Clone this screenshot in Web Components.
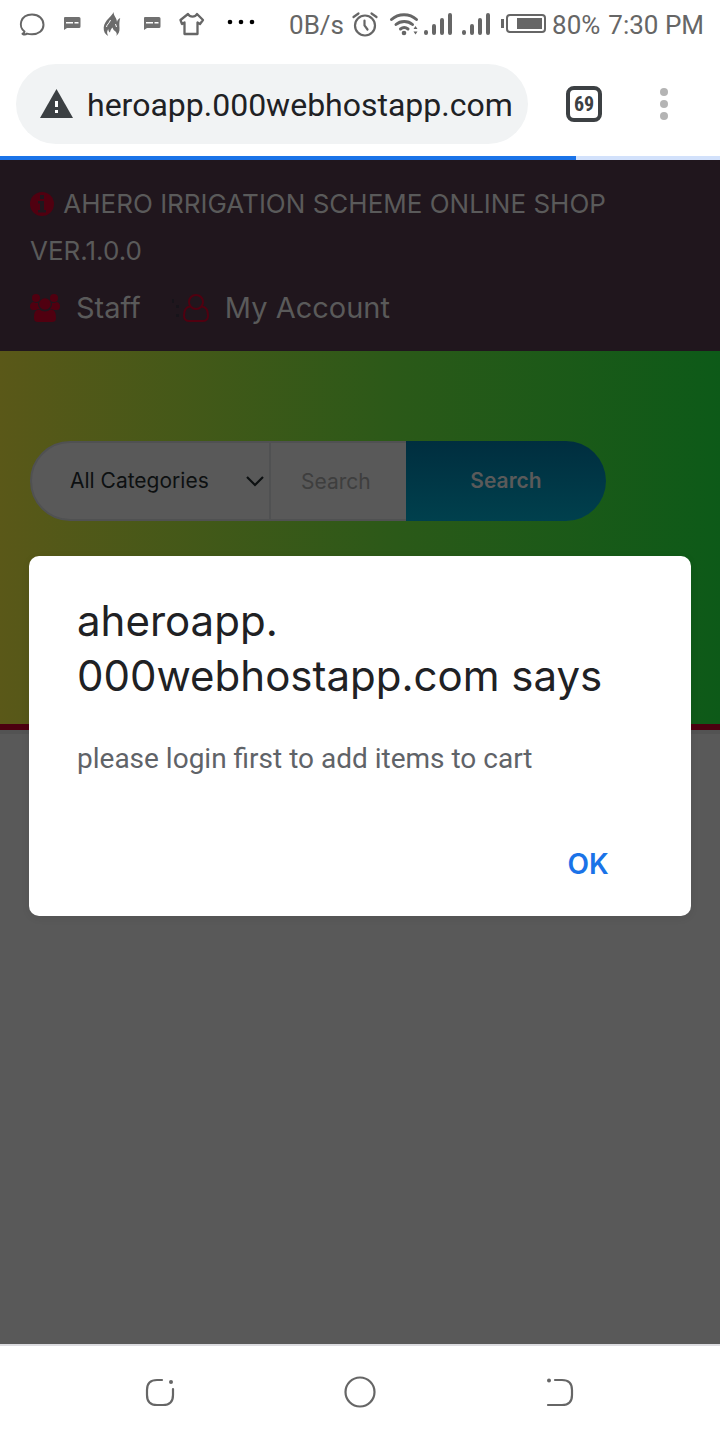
<!DOCTYPE html>
<html lang="en">
<head>
<meta charset="utf-8">
<meta name="viewport" content="width=device-width, initial-scale=1">
<title>Ahero Irrigation Scheme Online Shop</title>
<style>
html, body { margin: 0; background: #fff; }
body { font-family: Roboto, "Liberation Sans", sans-serif; }
</style>
</head>
<body>
<phone-screen>
  <status-bar slot="top"></status-bar>
  <browser-toolbar slot="top" tabs="69">heroapp.000webhostapp.com</browser-toolbar>
  <shop-header slot="page"></shop-header>
  <shop-banner slot="page"></shop-banner>
  <alert-dialog slot="dialog">
    <span slot="title">aheroapp.<br>000webhostapp.com says</span>
    <span slot="message">please login first to add items to cart</span>
    <span slot="action">OK</span>
  </alert-dialog>
  <navigation-bar slot="bottom"></navigation-bar>
</phone-screen>

<script>
function define(name, html) {
  const template = document.createElement('template');
  template.innerHTML = html;
  customElements.define(name, class extends HTMLElement {
    constructor() {
      super();
      this.attachShadow({ mode: 'open' }).append(template.content.cloneNode(true));
    }
    connectedCallback() {
      const tabs = this.shadowRoot.querySelector('[data-tabs]');
      if (tabs) tabs.textContent = this.getAttribute('tabs');
    }
  });
}

define('phone-screen', `
<style>
:host { display: flex; flex-direction: column; min-height: 100vh; }
main { flex: 1; position: relative; background: #595959; }
.layer { position: absolute; inset: 0; display: flex; align-items: center; justify-content: center; padding: 0 29px 32px; }
</style>
<slot name="top"></slot>
<main><slot name="page"></slot><div class="layer"><slot name="dialog"></slot></div></main>
<slot name="bottom"></slot>`);

define('status-bar', `
<style>
:host { display: flex; justify-content: space-between; align-items: center; height: 48px; padding: 0 16px; color: #666; font-size: 26px; line-height: 48px; white-space: nowrap; }
svg { display: block; flex: none; }
.text { display: flex; align-items: center; }
.text span { padding-top: 2px; }
.text .net { margin-right: 6px; }
.text svg { margin-right: 6px; }
.text .load { margin-right: 8px; }
</style>
<svg width="248" height="48" viewBox="16 0 248 48" fill="none" stroke="#666" stroke-width="2" stroke-linejoin="round" aria-hidden="true">
  <path d="M24.500 31.500C18 27 20 14.500 32 14.500c7 0 11.500 4.500 11.500 10.200 0 6-5 9.500-11.500 9.500-2 0-3.500-.2-5-.6-1 .8-3 1.100-4.500.2 1.500-.5 2-1.500 2-2.300z"/>
  <path fill="#707070" stroke="none" d="M65 17h14q1.500 0 1.500 1.500v8q0 1.500-1.500 1.500H67l-3 2V18q0-1 1-1z"/><path stroke="#fff" stroke-width="1.500" d="M66 22.800h7m1.500 0h4"/>
  <path fill="#707070" stroke="none" transform="translate(80 0)" d="M65 17h14q1.500 0 1.500 1.500v8q0 1.500-1.500 1.500H67l-3 2V18q0-1 1-1z"/><path stroke="#fff" stroke-width="1.500" d="M146 22.800h7m1.500 0h4"/>
  <path fill="#6b6b6b" stroke="none" d="M113.500 12c-1 4-9 8-9.800 15.500-.3 4 1.500 7 4.500 8.500-2-4-.5-5.500 0-7 .2 2 .8 3 1.800 3.500.3-2 1.200-3.800 2.500-5 .5 2 1.700 3 3 4 1.500 1.500 1.700 3 .5 4.500 2.500-1.500 3.800-4.500 3.500-8-.2-3-.3-7 .7-10-1.800 1-3 2-3.200 4-.5-5-3-5-3.500-10z"/><path stroke="#fff" stroke-width="1" d="M106.500 27c0-2 3-4 4-7M115.500 24l1 3M109 35l2-2M114 35v-2"/>
  <path stroke-width="2.300" d="M188 14c2 3.500 7 3.500 9 0l6 6-3 4-2.500-1.500V34h-13V22.500L182 24l-1.500-4z"/>
  <g fill="#000" stroke="none"><circle cx="230" cy="22" r="2.300"/><circle cx="241" cy="22" r="2.300"/><circle cx="252" cy="22" r="2.300"/></g>
</svg>
<div class="text">
  <span class="net">0B/s</span>
  <svg width="196" height="48" viewBox="350 0 196 48" fill="none" stroke="#666" stroke-width="2.200" stroke-linecap="round" aria-hidden="true">
    <circle cx="365" cy="25.500" r="10"/><path d="M364.500 20.500v5l3 4M353.500 17l5-3.500M371.500 13.500l5 3.500"/>
    <g stroke-width="3"><path d="M391.500 19.500c7-6.500 18-6.500 25 0M396 24.500c4.500-4 12-4 16.500 0M400.500 29c2.500-2 5-2 7.500 0"/></g><circle cx="404" cy="33" r="2.300" fill="#666" stroke="none"/><path stroke="none" fill="#666" d="M413.500 29l2-3 2 3zM413.500 31.500h4l-2 3z"/>
    <g stroke-width="4"><path d="M426 32v1M434 26v7M442 20v13M450 15v18M464 32v1M472 26v7M480 20v13M488 15v18"/></g>
    <path stroke-width="3" stroke-linecap="butt" d="M502.500 19v9"/><rect x="507" y="15" width="38" height="17" rx="3" stroke-width="2"/><path fill="#666" stroke="none" d="M517 18h25v11h-25z"/>
  </svg>
  <span class="load">80%</span><span>7:30 PM</span>
</div>`);

define('browser-toolbar', `
<style>
:host { display: block; }
.row { display: flex; align-items: center; padding: 16px 40px 12px 16px; }
.address { flex: 1; min-width: 0; display: flex; align-items: center; gap: 14px; height: 80px; padding: 2px 16px 0 24px; box-sizing: border-box; border-radius: 40px; background: #f1f3f4; color: #202124; font-size: 32px; line-height: 40px; white-space: nowrap; }
button { font: inherit; background: none; border: 0; padding: 0; color: #3c4043; }
.tabs { width: 36px; height: 36px; margin: 0 46px 0 38px; border: 4px solid #3c4043; border-radius: 8px; font: bold 20px/28px "Roboto Condensed", Roboto, sans-serif; }
.more { width: 32px; height: 36px; }
svg { display: block; flex: none; }
progress { display: block; width: 100%; height: 4px; border: 0; appearance: none; background: #d2e1fb; }
progress::-webkit-progress-bar { background: #d2e1fb; }
progress::-webkit-progress-value { background: #1a73e8; }
</style>
<div class="row">
  <div class="address">
    <svg width="33" height="32" viewBox="0 0 33 32" aria-hidden="true"><path fill="#3c4043" d="M16.500 0L33 29H0z"/><path fill="#fff" d="M15 12h3v6h-3zm0 9h3v3h-3z"/></svg>
    <slot></slot>
  </div>
  <button class="tabs" data-tabs aria-label="Tabs"></button>
  <button class="more" aria-label="More"><svg width="32" height="36" viewBox="0 0 32 36" fill="#b4b4b4"><circle cx="16" cy="6" r="4"/><circle cx="16" cy="18" r="4"/><circle cx="16" cy="30" r="4"/></svg></button>
</div>
<progress value="80" max="100" aria-label="Page loading"></progress>`);

define('shop-header', `
<style>
:host { display: block; padding: 20px 30px; background: #20161d; color: #5a5a5a; font: 29px/47px Inter, sans-serif; }
p { margin: 0; max-width: 600px; font-size: 26px; }
svg { flex: none; }
p svg { vertical-align: -3px; margin-right: 2px; }
nav { display: flex; align-items: center; margin-top: 10px; }
a { display: flex; align-items: center; gap: 16px; color: inherit; text-decoration: none; }
.dots { margin: 0 2px 0 30px; }
</style>
<p><svg width="24" height="24" viewBox="0 0 24 24" aria-hidden="true"><circle cx="12" cy="12" r="12" fill="#500010"/><path fill="#20161d" d="M10 3h4v4h-4zM8 9h6v9h2v2.500H8V18h2v-6.500H8z"/></svg> AHERO IRRIGATION SCHEME ONLINE SHOP VER.1.0.0</p>
<nav>
  <a href="#staff"><svg width="30" height="28" viewBox="0 0 30 28" fill="#500010" aria-hidden="true"><circle cx="6" cy="4" r="4"/><circle cx="24" cy="4" r="4"/><circle cx="15" cy="10" r="5.800"/><path d="M3 8c2 1 4 1 5 1 0 3 .5 4.500 2 6-2 0-3 .5-4 1H3c-4 0-4-7 0-8zM27 8c-2 1-4 1-5 1 0 3-.5 4.500-2 6 2 0 3 .5 4 1h3c4 0 4-7 0-8zM9.500 15.500c3 2.500 8 2.500 11 0C25 15.500 26 19 26 24c0 3-1.500 4-4 4H8c-2.500 0-4-1-4-4 0-5 1-8.500 5.500-8.500z"/></svg>Staff</a>
  <svg class="dots" width="10" height="24" viewBox="0 0 10 24" fill="#17141a" aria-hidden="true"><path d="M1 3h2v4H1zM5 9h3v3H5zM5 18h3v3H5z"/></svg>
  <a href="#account"><svg width="26" height="28" viewBox="0 0 26 28" fill="none" stroke="#500010" stroke-width="2" aria-hidden="true"><circle cx="13" cy="8" r="7"/><path d="M7 12.500c-4 .5-6 4-6 9C1 25 3 27 6 27h14c3 0 5-2 5-5.500 0-5-2-8.500-6-9"/></svg>My Account</a>
</nav>`);

define('shop-banner', `
<style>
:host { display: block; box-sizing: border-box; height: 379px; padding: 90px 30px; border-bottom: 6px solid #4c0010; background: linear-gradient(90deg, #5a5818, #2b5918 55%, #0d5a18); font: 21px/24px Inter, sans-serif; box-shadow: 0 4px #535353; }
form { display: grid; grid-template-columns: 241px 1fr 200px; height: 80px; max-width: 576px; }
.field { display: flex; align-items: center; position: relative; box-sizing: border-box; border: 2px solid #505152; background: #595959; }
.category { border-radius: 40px 0 0 40px; }
.query { border-left: 0; border-right: 0; }
select, input { width: 100%; height: 100%; box-sizing: border-box; appearance: none; border: 0; background: none; font: inherit; color: #0d1011; outline: 0; }
select { padding: 0 24px 0 38px; }
input { padding: 0 30px; border-radius: 0; }
input::placeholder { color: #3e3e3e; opacity: 1; }
.field svg { position: absolute; right: 4px; pointer-events: none; }
button { border: 0; padding: 0; border-radius: 0 40px 40px 0; background: linear-gradient(#002e3f, #00404d); color: #5a5a5a; font: 600 21px/24px Inter, sans-serif; }
</style>
<form>
  <div class="field category"><select aria-label="Category"><option>All Categories</option></select><svg width="20" height="12" viewBox="0 0 20 12" fill="none" stroke="#0d1011" stroke-width="2.200" aria-hidden="true"><path d="M2 2l8 8 8-8"/></svg></div>
  <div class="field query"><input type="text" aria-label="Search" placeholder="Search"></div>
  <button type="button">Search</button>
</form>`);

define('alert-dialog', `
<style>
:host { flex: 1; display: block; }
section { display: flex; flex-direction: column; box-sizing: border-box; padding: 37px 48px 24px; border-radius: 10px; background: #fff; box-shadow: 0 2px 8px #0001; }
h1 { margin: 0; color: #202124; font: 42px/55px Inter, sans-serif; }
p { margin: 38px 0 0; color: #5f6368; font-size: 28px; line-height: 36px; }
button { align-self: flex-end; width: 106px; height: 56px; margin: 59px 2px 0 0; border: 0; padding: 0; background: none; color: #1a73e8; font: 600 28px/56px Inter, sans-serif; }
</style>
<section role="alertdialog" aria-labelledby="t" aria-describedby="m">
  <h1 id="t"><slot name="title"></slot></h1>
  <p id="m"><slot name="message"></slot></p>
  <button><slot name="action"></slot></button>
</section>`);

define('navigation-bar', `
<style>
:host { display: flex; justify-content: center; gap: 160px; box-sizing: border-box; height: 96px; padding-top: 26px; border-top: 2px solid #dcdce0; background: #fff; }
button { width: 40px; height: 40px; border: 0; padding: 0; background: none; }
svg { display: block; fill: none; stroke: #666; stroke-width: 2.200; stroke-linecap: round; }
.dot { fill: #666; stroke: none; }
</style>
<button aria-label="Recent apps"><svg width="40" height="40"><path d="M22 8h-5q-10 0-10 10v5q0 10 10 10h6q10 0 10-10v-6"/><circle class="dot" cx="31" cy="10" r="2"/></svg></button>
<button aria-label="Home"><svg width="40" height="40"><circle cx="20" cy="20" r="14.500"/></svg></button>
<button aria-label="Back"><svg width="40" height="40"><path d="M15 8h7q10 0 10 10v5q0 10-10 10H8"/><circle class="dot" cx="9" cy="8.500" r="2"/></svg></button>`);
</script>
</body>
</html>
